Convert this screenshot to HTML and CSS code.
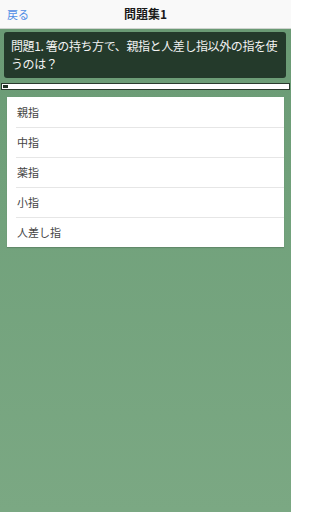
FILE: index.html
```html
<!DOCTYPE html>
<html lang="ja">
<head>
<meta charset="utf-8">
<link rel="stylesheet" href="styles.css">
</head>
<body>
<div class="app">
  <header class="nav">
    <span class="back">戻る</span>
    <span class="title">問題集1</span>
  </header>
  <main class="content">
    <div class="question">問題1. 箸の持ち方で、親指と人差し指以外の指を使うのは？</div>
    <div class="progress"><div class="progress-fill"></div></div>
    <ul class="choices">
      <li class="choice">親指</li>
      <li class="choice">中指</li>
      <li class="choice">薬指</li>
      <li class="choice">小指</li>
      <li class="choice">人差し指</li>
    </ul>
  </main>
</div>
</body>
</html>
```
FILE: styles.css
```css
html, body {
  margin: 0;
  padding: 0;
  height: 100%;
}
body {
  font-family: "Noto Sans CJK JP", "Noto Sans", sans-serif;
  background: #ffffff;
}
.app {
  display: flex;
  flex-direction: column;
  height: 512px;
  width: 291px;
  overflow: hidden;
}
.nav {
  position: relative;
  height: 28px;
  flex: none;
  background: #f9f9f9;
  border-bottom: 1px solid #cfd3cf;
  display: flex;
  align-items: center;
  justify-content: center;
}
.back {
  position: absolute;
  left: 7px;
  top: 6px;
  font-size: 11px;
  line-height: 16px;
  color: #4f8de6;
}
.title {
  font-size: 12px;
  font-weight: 700;
  color: #1a1a1a;
  line-height: 16px;
}
.content {
  flex: 1;
  background: linear-gradient(180deg, #6a9a74 0%, #72a27c 40%, #7ba883 100%);
  padding: 3px 1px 0 1px;
  display: flex;
  flex-direction: column;
}
.question {
  margin: 0 4px 0 3px;
  background: #243a2b;
  border-radius: 3px;
  color: #f2f2f2;
  font-size: 12px;
  line-height: 18px;
  padding: 5px 6px 5px 7px;
  letter-spacing: -0.4px;
}
.progress {
  margin-top: 5px;
  height: 3px;
  border: 1px solid #2a3a2e;
  background: #ffffff;
  padding: 1px;
  display: flex;
}
.progress-fill {
  width: 5px;
  background: #223326;
}
.choices {
  list-style: none;
  margin: 7px 6px 0 6px;
  padding: 0;
  background: #ffffff;
  box-shadow: 0 1px 1px rgba(0,0,0,0.15);
}
.choice {
  height: 29px;
  line-height: 29px;
  padding-left: 10px;
  font-size: 11px;
  color: #444444;
}
.choice:first-child {
  height: 30px;
  line-height: 30px;
}
.choice + .choice {
  border-top: 1px solid #e6e6e6;
  margin-left: 9px;
  padding-left: 1px;
}
```
